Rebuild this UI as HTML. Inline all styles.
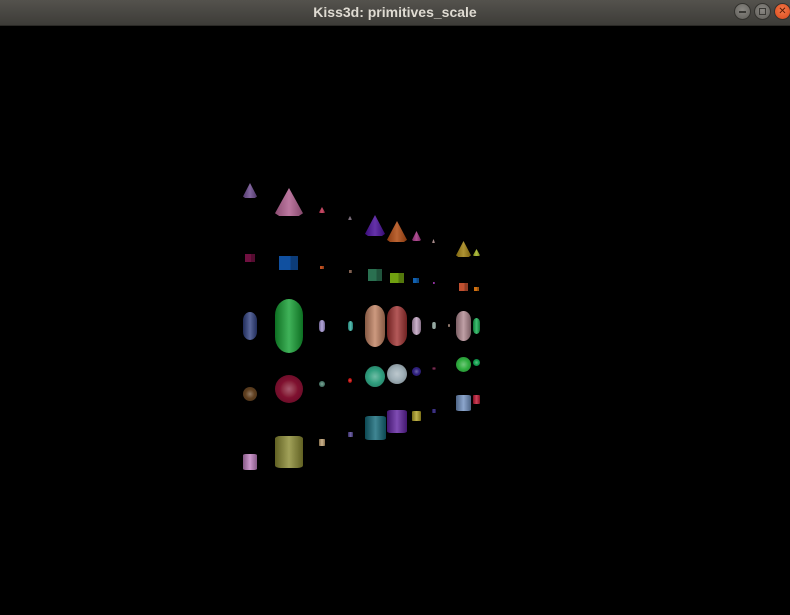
<!DOCTYPE html>
<html><head><meta charset="utf-8"><style>
*{margin:0;padding:0;box-sizing:border-box}
body{width:790px;height:615px;background:#000;overflow:hidden;position:relative;font-family:"Liberation Sans","DejaVu Sans",sans-serif}
#tb{position:absolute;left:0;top:0;width:790px;height:26px;background:linear-gradient(#54524d,#3d3c38);border-bottom:1px solid #2a2926}
#tt{position:absolute;left:0;width:790px;top:4px;text-align:center;color:#dfdbd2;font-size:14px;font-weight:bold}
.b{position:absolute;top:3px;width:17px;height:17px;border-radius:50%;background:radial-gradient(circle at 50% 40%,#8a8883,#5e5c57);border:1px solid #33322e}
.s{position:absolute}
.cone{clip-path:polygon(50% 0,100% 90%,85% 100%,15% 100%,0 90%)}
.cap{border-radius:50%/30%}
.sph{border-radius:50%}
.cyl{border-radius:20%/8%}
</style></head><body>
<div id="tb"><div id="tt">Kiss3d: primitives_scale</div>
<div class="b" style="left:734px"><div style="position:absolute;left:4px;top:7px;width:7px;height:1.5px;background:#3a3935"></div></div>
<div class="b" style="left:754px"><div style="position:absolute;left:4px;top:4px;width:7px;height:7px;border:1.5px solid #3a3935"></div></div>
<div class="b" style="left:774px;background:radial-gradient(circle at 50% 40%,#f47a4a,#d9471a)"><div style="position:absolute;left:0;top:0;width:15px;line-height:15px;text-align:center;font-size:10px;color:#5a1a05">✕</div></div>
</div>
<div id="scene"></div>
<script>
const items=[
// cones
['cone',243,183,14,15,'#6b4a8c'],['cone',275,188,28,28,'#b0608f'],['cone',319,207,6,6,'#c03050'],['cone',348,216,4,4,'#706070'],
['cone',365,215,20,21,'#4a0e9a'],['cone',387,221,20,21,'#b04a10'],['cone',412,231,9,10,'#a03080'],['cone',432,239,3,4,'#a08080'],
['cone',456,241,15,16,'#a08010'],['cone',473,249,7,7,'#a0b020'],
// cubes
['cube',245,254,10,8,'#701040'],['cube',279,256,19,14,'#1050a0'],['cube',320,266,4,3,'#c05020'],['cube',349,270,3,3,'#806050'],
['cube',368,269,14,12,'#2a7050'],['cube',390,273,14,10,'#70a010'],['cube',413,278,6,5,'#1060b0'],['cube',433,282,2,2,'#9030a0'],
['cube',459,283,9,8,'#c05030'],['cube',474,287,5,4,'#d07010'],
// capsules
['cap',243,312,14,28,'#304080'],['cap',275,299,28,54,'#10a030'],['cap',319,320,6,12,'#a090d0'],['cap',348,321,5,10,'#30b0a0'],
['cap',365,305,20,42,'#c08060'],['cap',387,306,20,40,'#a03030'],['cap',412,317,9,18,'#c0a0c0'],['cap',432,322,4,7,'#90a8a0'],
['cap',448,324,2,3,'#a08070'],['cap',456,311,15,30,'#b08890'],['cap',473,318,7,16,'#10b050'],
// spheres
['sph',243,387,14,14,'#604020'],['sph',275,375,28,28,'#801030'],['sph',319,381,6,6,'#508070'],['sph',348,378,4,5,'#c01010'],
['sph',365,366,20,21,'#30a080'],['sph',387,364,20,20,'#a0b0b8'],['sph',412,367,9,9,'#302080'],['sph',432,367,4,3,'#501030'],
['sph',456,357,15,15,'#30b040'],['sph',473,359,7,7,'#10a050'],
// cylinders
['cyl',243,454,14,16,'#c080c0'],['cyl',275,436,28,32,'#8a8a30'],['cyl',319,439,6,7,'#c0a070'],['cyl',348,432,5,5,'#504090'],
['cyl',365,416,21,24,'#106878'],['cyl',387,410,20,23,'#6020a0'],['cyl',412,411,9,10,'#b0a020'],['cyl',432,409,4,4,'#201070'],
['cyl',456,395,15,16,'#7090c0'],['cyl',473,395,7,9,'#c01030']
];
let h='';
for(const [t,x,y,w,hh,c] of items){
 let bg;
 if(t==='sph') bg=`radial-gradient(circle at 50% 50%, color-mix(in srgb,${c} 70%,#fff) 0%, ${c} 45%, color-mix(in srgb,${c} 70%,#000) 100%)`;
 else if(t==='cone') bg=`linear-gradient(90deg, color-mix(in srgb,${c} 80%,#000), color-mix(in srgb,${c} 85%,#fff) 50%, color-mix(in srgb,${c} 75%,#000))`;
 else if(t==='cube') bg=`linear-gradient(90deg, ${c} 0 60%, color-mix(in srgb,${c} 75%,#000) 60%)`;
 else bg=`linear-gradient(90deg, color-mix(in srgb,${c} 70%,#000), color-mix(in srgb,${c} 80%,#fff) 50%, color-mix(in srgb,${c} 70%,#000))`;
 h+=`<div class="s ${t}" style="left:${x}px;top:${y}px;width:${w}px;height:${hh}px;background:${bg}"></div>`;
}
document.getElementById('scene').innerHTML=h;
</script>
</body></html>
